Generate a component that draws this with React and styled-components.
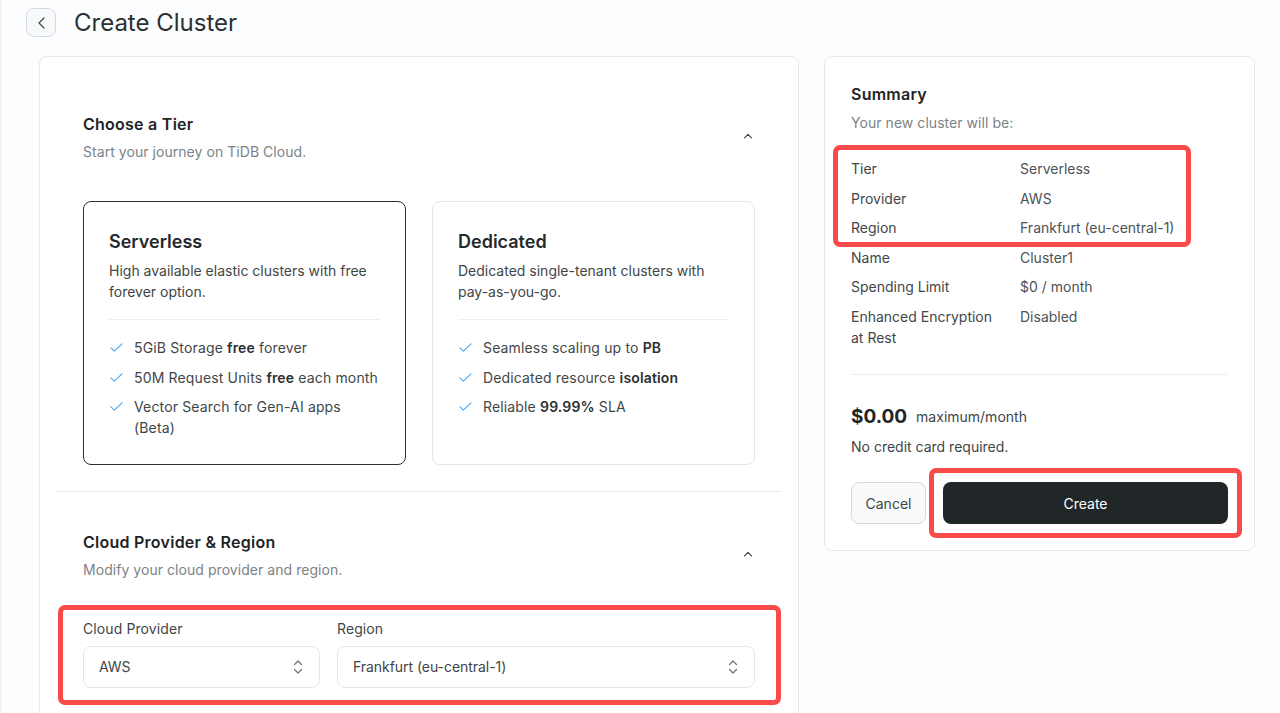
import React from "react";
import styled, { createGlobalStyle } from "styled-components";

const Global = createGlobalStyle`
  html, body { margin: 0; padding: 0; height: 713px; overflow: hidden; background: #fcfdfe; }
  body { font-family: Inter, "Noto Sans", "Liberation Sans", sans-serif; color: #3f4648; }
  * { box-sizing: border-box; }
`;
const Page = styled.div`
  position: relative;
  height: 713px;
  overflow: hidden;
  border-left: 2px solid #f1f3f5;
  padding: 8px 26px 0 24px;
`;
const Header = styled.header`
  display: flex;
  align-items: center;
  gap: 18px;
  height: 29px;
  margin-bottom: 19px;
`;
const BackButton = styled.button`
  width: 30px;
  height: 29px;
  padding: 0;
  display: flex;
  align-items: center;
  justify-content: center;
  background: #f8f9fb;
  border: 1px solid #d5d9de;
  border-radius: 8px;
  color: #3f4648;
`;
const Title = styled.h1`
  margin: 0;
  font-size: 24px;
  font-weight: 400;
  color: #2b3032;
  line-height: 30px;
`;
const Columns = styled.div`
  display: flex;
  align-items: flex-start;
  gap: 25px;
  margin-left: 13px;
`;
const MainCard = styled.section`
  width: 760px;
  height: 720px;
  flex: none;
  padding: 26px 17px 0;
  background: #fff;
  border: 1px solid #e6e9ec;
  border-radius: 8px;
`;
const Section = styled.div`
  padding: ${(p) => p.$top}px 26px ${(p) => p.$bottom}px;
  border-bottom: ${(p) => (p.$divider ? "1px solid #e9ecef" : "none")};
`;
const SectionHead = styled.div`
  display: flex;
  justify-content: space-between;
  align-items: center;
  padding-right: 1px;
`;
const SectionTitle = styled.h2`
  margin: 0;
  font-size: 16px;
  line-height: 24px;
  font-weight: 600;
  letter-spacing: 0.25px;
  color: #1f2426;
`;
const Muted = styled.p`
  margin: ${(p) => p.$gap ?? 5}px 0 0;
  font-size: 14px;
  line-height: 22px;
  color: #7c8387;
  letter-spacing: 0.05px;
`;
const Chevron = styled.span`
  display: flex;
  margin-bottom: 3px;
  color: #3f4648;
`;
const Tiers = styled.div`
  display: grid;
  grid-template-columns: 323px 323px;
  gap: 26px;
  margin-top: 38px;
`;
const TierCard = styled.div`
  height: 264px;
  padding: 26px 25px 0;
  border-radius: 8px;
  background: #fff;
  border: 1px solid ${(p) => (p.$active ? "#2b3032" : "#e4e7ea")};
`;
const TierName = styled.h3`
  margin: 0;
  font-size: 18px;
  line-height: 28px;
  font-weight: 600;
  color: #25292b;
`;
const TierDesc = styled.p`
  margin: 4px 0 0;
  font-size: 14px;
  line-height: 21px;
  padding-bottom: 17px;
  border-bottom: 1px solid #eceef0;
`;
const Features = styled.ul`
  list-style: none;
  margin: 17px 0 0;
  padding: 0;
  display: flex;
  flex-direction: column;
  gap: 8.5px;
`;
const Feature = styled.li`
  display: flex;
  gap: 11px;
  font-size: 14px;
  line-height: 21px;
  letter-spacing: 0.15px;
  b { font-weight: 600; color: #2b3032; }
  svg { flex: none; margin: 4px 0 0 1px; }
`;
const Fields = styled.div`
  display: grid;
  grid-template-columns: 237px 418px;
  gap: 17px;
  margin-top: 38px;
`;
const Label = styled.label`
  display: block;
  font-size: 14px;
  line-height: 20px;
  letter-spacing: 0.1px;
  margin-bottom: 7px;
`;
const Select = styled.div`
  height: 42px;
  padding: 0 15px 1px;
  display: flex;
  align-items: center;
  justify-content: space-between;
  font-size: 14px;
  letter-spacing: -0.05px;
  background: #fff;
  border: 1px solid #e4e8ea;
  border-radius: 8px;
`;
const SideCard = styled.aside`
  width: 431px;
  height: 495px;
  flex: none;
  padding: 25px 26px 0;
  background: #fff;
  border: 1px solid #e6e9ec;
  border-radius: 8px;
`;
const Rows = styled.dl`
  margin: 24px 0 0;
  padding-bottom: 26px;
  border-bottom: 1px solid #eceef0;
  display: grid;
  grid-template-columns: 169px 1fr;
  row-gap: 8.5px;
  font-size: 14px;
  line-height: 21px;
  dt, dd { margin: 0; }
  dt { color: #3f4648; padding-right: 14px; }
  dd { color: #4c5356; }
`;
const Price = styled.div`
  display: flex;
  align-items: center;
  gap: 9px;
  margin-top: 28px;
  font-size: 14px;
  strong { font-size: 19px; line-height: 28px; font-weight: 700; color: #1f2426; }
`;
const Note = styled.p`
  margin: 5px 0 0;
  font-size: 14px;
  line-height: 22px;
`;
const Actions = styled.div`
  display: flex;
  gap: 17px;
  margin-top: 24px;
`;
const CancelButton = styled.button`
  width: 75px;
  height: 42px;
  padding: 1px 0 0;
  font: inherit;
  font-size: 14px;
  color: #3f4648;
  background: #f8f9fa;
  border: 1px solid #d5dade;
  border-radius: 8px;
`;
const CreateButton = styled.button`
  flex: 1;
  height: 42px;
  padding: 1px 0 0;
  font: inherit;
  font-size: 14px;
  color: #fff;
  background: #212628;
  border: none;
  border-radius: 8px;
`;
const Callout = styled.div`
  position: absolute;
  left: ${(p) => p.$x}px;
  top: ${(p) => p.$y}px;
  width: ${(p) => p.$w}px;
  height: ${(p) => p.$h}px;
  border: 5px solid #f94c4a;
  border-radius: 7px;
  pointer-events: none;
`;

const Check = () => (
  <svg width="13" height="13" viewBox="0 0 14 14" fill="none" stroke="#4aa5ee" strokeWidth="1.2" strokeLinecap="round" strokeLinejoin="round">
    <path d="M1 7.5 4.6 11 13 3" />
  </svg>
);
const ChevronUp = () => (
  <svg width="12" height="12" viewBox="0 0 12 12" fill="none" stroke="currentColor" strokeWidth="1.2" strokeLinecap="round" strokeLinejoin="round">
    <path d="M2.5 7.8 6 4.3l3.5 3.5" />
  </svg>
);
const Updown = () => (
  <svg width="12" height="16" viewBox="0 0 12 16" fill="none" stroke="#6c7376" strokeWidth="1.2" strokeLinecap="round" strokeLinejoin="round">
    <path d="M2.5 5.5 6 2l3.5 3.5M2.5 10.5 6 14l3.5-3.5" />
  </svg>
);

const tiers = [
  {
    name: "Serverless", active: true,
    desc: "High available elastic clusters with free forever option.",
    items: [
      <>5GiB Storage <b>free</b> forever</>,
      <>50M Request Units <b>free</b> each month</>,
      <>Vector Search for Gen-AI apps (Beta)</>,
    ],
  },
  {
    name: "Dedicated",
    desc: "Dedicated single-tenant clusters with pay-as-you-go.",
    items: [
      <>Seamless scaling up to <b>PB</b></>,
      <>Dedicated resource <b>isolation</b></>,
      <>Reliable <b>99.99%</b> SLA</>,
    ],
  },
];
const summary = [
  ["Tier", "Serverless"],
  ["Provider", "AWS"],
  ["Region", "Frankfurt (eu-central-1)"],
  ["Name", "Cluster1"],
  ["Spending Limit", "$0 / month"],
  ["Enhanced Encryption at Rest", "Disabled"],
];

export default function App() {
  return (
    <Page>
      <Global />
      <Header>
        <BackButton aria-label="Back">
          <svg width="14" height="14" viewBox="0 0 14 14" fill="none" stroke="currentColor" strokeWidth="1.2" strokeLinecap="round" strokeLinejoin="round">
            <path d="M10 2 5 7l5 5" />
          </svg>
        </BackButton>
        <Title>Create Cluster</Title>
      </Header>
      <Columns>
        <MainCard>
          <Section $top={29} $bottom={26} $divider>
            <SectionHead>
              <div>
                <SectionTitle>Choose a Tier</SectionTitle>
                <Muted>Start your journey on TiDB Cloud.</Muted>
              </div>
              <Chevron><ChevronUp /></Chevron>
            </SectionHead>
            <Tiers>
              {tiers.map((t) => (
                <TierCard key={t.name} $active={t.active}>
                  <TierName>{t.name}</TierName>
                  <TierDesc>{t.desc}</TierDesc>
                  <Features>
                    {t.items.map((it, i) => (
                      <Feature key={i}><Check /><span>{it}</span></Feature>
                    ))}
                  </Features>
                </TierCard>
              ))}
            </Tiers>
          </Section>
          <Section $top={38} $bottom={26}>
            <SectionHead>
              <div>
                <SectionTitle>Cloud Provider &amp; Region</SectionTitle>
                <Muted>Modify your cloud provider and region.</Muted>
              </div>
              <Chevron><ChevronUp /></Chevron>
            </SectionHead>
            <Fields>
              <div>
                <Label>Cloud Provider</Label>
                <Select>AWS<Updown /></Select>
              </div>
              <div>
                <Label>Region</Label>
                <Select>Frankfurt (eu-central-1)<Updown /></Select>
              </div>
            </Fields>
          </Section>
        </MainCard>
        <SideCard>
          <SectionTitle>Summary</SectionTitle>
          <Muted $gap={6}>Your new cluster will be:</Muted>
          <Rows>
            {summary.map(([k, v]) => (
              <React.Fragment key={k}>
                <dt>{k}</dt>
                <dd>{v}</dd>
              </React.Fragment>
            ))}
          </Rows>
          <Price><strong>$0.00</strong> maximum/month</Price>
          <Note>No credit card required.</Note>
          <Actions>
            <CancelButton>Cancel</CancelButton>
            <CreateButton>Create</CreateButton>
          </Actions>
        </SideCard>
      </Columns>
      <Callout $x={56} $y={605} $w={723} $h={100} />
      <Callout $x={831} $y={145} $w={358} $h={102} />
      <Callout $x={927} $y={468} $w={313} $h={70} />
    </Page>
  );
}
